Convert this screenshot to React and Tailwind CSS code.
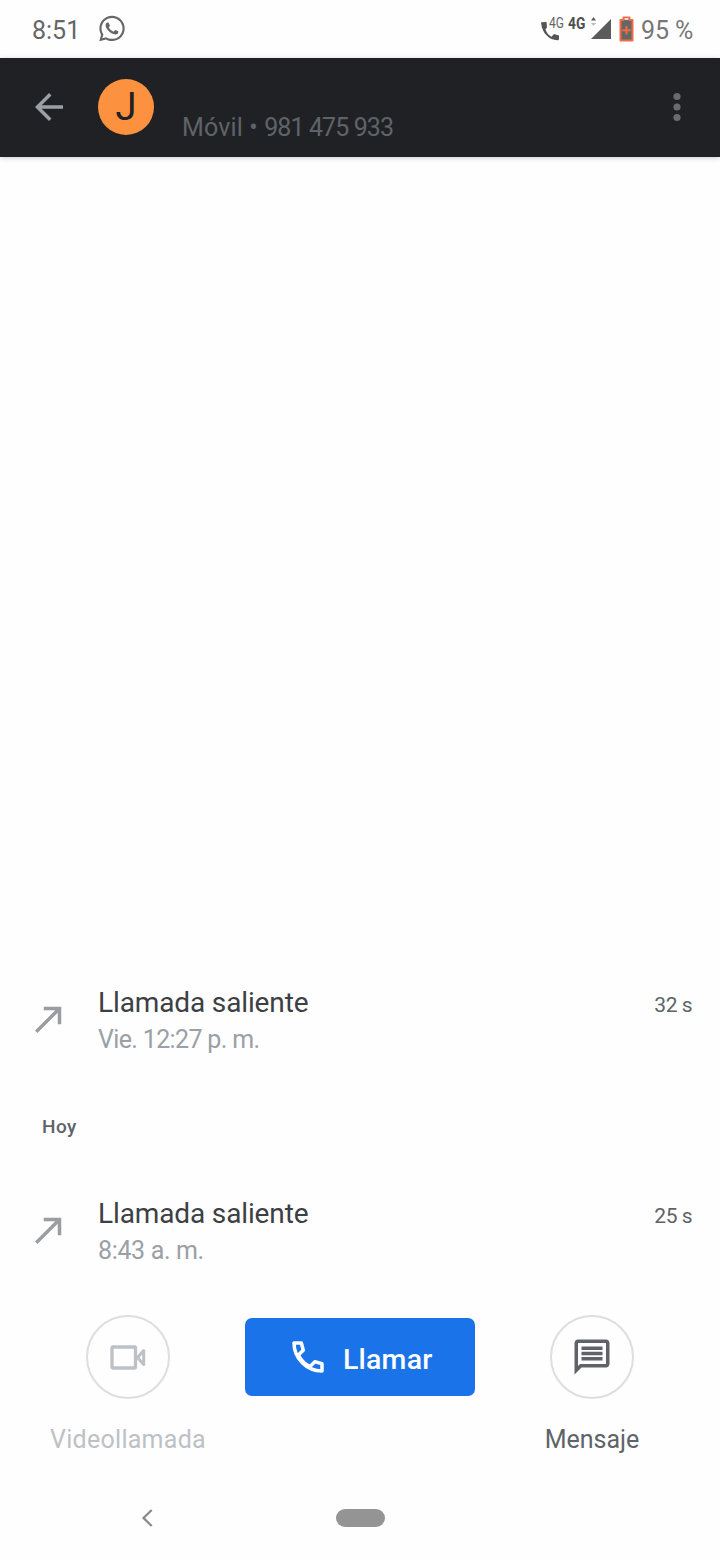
import React from "react";
import { FaWhatsapp } from "react-icons/fa";

function StatusBar() {
  return (
    <div className="flex h-[58px] shrink-0 items-center pl-[32px] pr-[27px] text-[#666666]">
      <span className="w-[48px] whitespace-nowrap pt-[4px] text-[25px] leading-[30px]">8:51</span>
      <FaWhatsapp className="-mt-[1px] ml-[18px] h-[29px] w-[28px]" />
      <div className="ml-auto flex items-center">
        <div className="flex h-[30px] items-start">
          <svg className="mt-[6px] h-[22px] w-[20px]" viewBox="0 0 20 22" fill="#555555">
            <path d="M0.200 2.300Q0 2 0.200 3.500C1 13 8.500 20.500 17 20.200Q18 20 18 19V15.400L13 14L10.500 16.700C8 15.500 5.500 12.800 4.500 9.500L6 7.300L5.500 2Z" />
          </svg>
          <span className="-ml-[12px] mt-[1px] w-[16px] origin-left scale-x-[0.86] whitespace-nowrap text-[14px] leading-[16px]">4G</span>
        </div>
        <span className="-mt-[11px] ml-[3px] w-[19px] origin-left scale-x-[0.86] whitespace-nowrap text-[16px] font-bold leading-[18px] text-[#505050]">4G</span>
        <svg className="-mt-[2px] ml-[4px] h-[24px] w-[21px]" viewBox="0 0 21 24" fill="#5b5b5b">
          <path d="M20 3V23H0Z" />
          <path d="M0 4.500L2.500 1L5 4.500Z" />
          <path d="M0 7L2.500 10L5 7Z" fill="#bbbbbb" />
        </svg>
        <svg className="-mt-[1px] ml-[7px] h-[26px] w-[15px]" viewBox="0 0 15 26">
          <path d="M4.500 4V1.500H10.500V4H13.500V24.500H1.500V4Z" fill="#666666" stroke="#ee6c45" strokeWidth="2" strokeLinejoin="round" />
          <path d="M5.500 3H9.500" stroke="#f7d5ca" strokeWidth="2" />
          <path d="M7.500 10V18.500M3.300 14.200H11.700" stroke="#ee6c45" strokeWidth="2" />
        </svg>
        <span className="ml-[7px] w-[52px] whitespace-nowrap pt-[4px] text-[25px] leading-[30px] tracking-[-0.1px] text-[#777777]">95 %</span>
      </div>
    </div>
  );
}

function Header() {
  return (
    <header className="flex h-[99px] shrink-0 items-center bg-[#202124] pb-[1px] pl-[28px] pr-[22px] shadow-[0_1px_5px_rgba(0,0,0,0.2)]">
      <svg className="h-[42px] w-[42px]" viewBox="0 0 24 24" fill="#9aa0a6">
        <path d="M20 11H7.830l5.590-5.590L12 4l-8 8 8 8 1.410-1.410L7.830 13H20v-2z" />
      </svg>
      <div className="ml-[28px] flex h-[56px] w-[56px] items-center justify-center rounded-full bg-[#fc923f] text-[38px] leading-none text-[#202124]">
        J
      </div>
      <span className="ml-[28px] mt-[42px] whitespace-nowrap text-[25px] leading-[30px] tracking-[0.15px] text-[#5f6368]">
        Móvil • <span className="tracking-[-0.9px]">981 475 933</span>
      </span>
      <svg className="ml-auto h-[42px] w-[42px]" viewBox="0 0 42 42" fill="#6a6b6e">
        <circle cx="21" cy="10.500" r="3.600" />
        <circle cx="21" cy="21" r="3.600" />
        <circle cx="21" cy="31.500" r="3.600" />
      </svg>
    </header>
  );
}

function CallRow({ time, duration, timeClass }) {
  return (
    <div className="flex h-[80px] items-start pl-[28px] pr-[28px]">
      <svg className="mt-[18px] h-[42px] w-[42px]" viewBox="0 0 24 24" fill="#9a9da1">
        <path d="M9 5v2h6.590L4 18.590 5.410 20 17 8.410V15h2V5z" />
      </svg>
      <div className="ml-[28px] flex flex-col whitespace-nowrap">
        <span className="mt-[5px] text-[28px] leading-[36px] tracking-[-0.13px] text-[#3c4043]">Llamada saliente</span>
        <span className={`mt-[2px] text-[25px] leading-[34px] text-[#9aa0a6] ${timeClass}`}>{time}</span>
      </div>
      <span className="ml-auto mt-[12px] whitespace-nowrap text-[21px] leading-[26px] tracking-[-0.5px] text-[#5f6368]">{duration}</span>
    </div>
  );
}

function Actions() {
  return (
    <div className="flex h-[150px] shrink-0 items-start">
      <div className="flex w-[256px] flex-col items-center">
        <div className="flex h-[84px] w-[84px] items-center justify-center rounded-full border-2 border-[#dedede]">
          <svg className="h-[25px] w-[36px]" viewBox="0 0 36 25" fill="none" stroke="#bdc1c6" strokeWidth="3.300" strokeLinejoin="round">
            <rect x="2" y="2" width="23.500" height="21" rx="0.800" />
            <path d="M27.500 12.500L33.700 5.500V19.500Z" strokeWidth="3" />
          </svg>
        </div>
        <span className="mt-[25px] whitespace-nowrap text-[25px] leading-[32px] tracking-[0.28px] text-[#bdc1c6]">Videollamada</span>
      </div>
      <button className="-ml-[11px] mt-[3px] flex h-[78px] w-[230px] items-center rounded-[7px] bg-[#1a73e8] pl-[42px] text-white">
        <svg className="h-[42px] w-[42px]" viewBox="0 0 24 24" fill="none" stroke="currentColor" strokeWidth="2" strokeLinejoin="round">
          <path d="M4 4H8.200L9.300 8.100L6.500 10.900C7.900 13.700 10.300 16.100 13.100 17.500L15.900 14.700L20 15.800V20C11.200 20 4 12.800 4 4Z" />
        </svg>
        <span className="ml-[14px] mt-[5px] whitespace-nowrap text-[28.500px] font-medium leading-[36px] tracking-[0.2px]">Llamar</span>
      </button>
      <div className="-ml-[11px] flex w-[256px] flex-col items-center">
        <div className="flex h-[84px] w-[84px] items-center justify-center rounded-full border-2 border-[#dedede]">
          <svg className="h-[42px] w-[42px]" viewBox="0 0 24 24" fill="#5f6368">
            <path d="M4 4h16v12H5.170L4 17.170V4m0-2c-1.100 0-1.990.9-1.990 2L2 22l4-4h14c1.100 0 2-.9 2-2V4c0-1.100-.9-2-2-2H4zm2 10h12v2H6v-2zm0-3h12v2H6V9zm0-3h12v2H6V6z" />
          </svg>
        </div>
        <span className="mt-[25px] whitespace-nowrap text-[25px] leading-[32px] text-[#5f6368]">Mensaje</span>
      </div>
    </div>
  );
}

function NavigationBar() {
  return (
    <nav className="flex h-[95px] shrink-0 items-center pl-[141px] pt-[11px]">
      <svg className="h-[18px] w-[12px]" viewBox="0 0 12 18" fill="none" stroke="#888888" strokeWidth="2.200">
        <path d="M10.700 1L2.500 9L10.700 17" />
      </svg>
      <div className="ml-[183px] h-[18px] w-[49px] rounded-full bg-[#949494]" />
    </nav>
  );
}

export default function App() {
  return (
    <div className="flex h-[1560px] w-[720px] flex-col overflow-hidden bg-[#fefefe] font-['Roboto',sans-serif]">
      <StatusBar />
      <Header />
      <main className="flex min-h-0 flex-1 flex-col justify-end pb-[44px]">
        <CallRow time="Vie. 12:27 p. m." duration="32 s" timeClass="tracking-[-0.65px]" />
        <h2 className="mb-[53px] mt-[55px] pl-[42px] text-[19px] font-medium leading-[23px] tracking-[0.5px] text-[#5f6368]">Hoy</h2>
        <CallRow time="8:43 a. m." duration="25 s" timeClass="tracking-[-0.35px]" />
      </main>
      <Actions />
      <NavigationBar />
    </div>
  );
}
